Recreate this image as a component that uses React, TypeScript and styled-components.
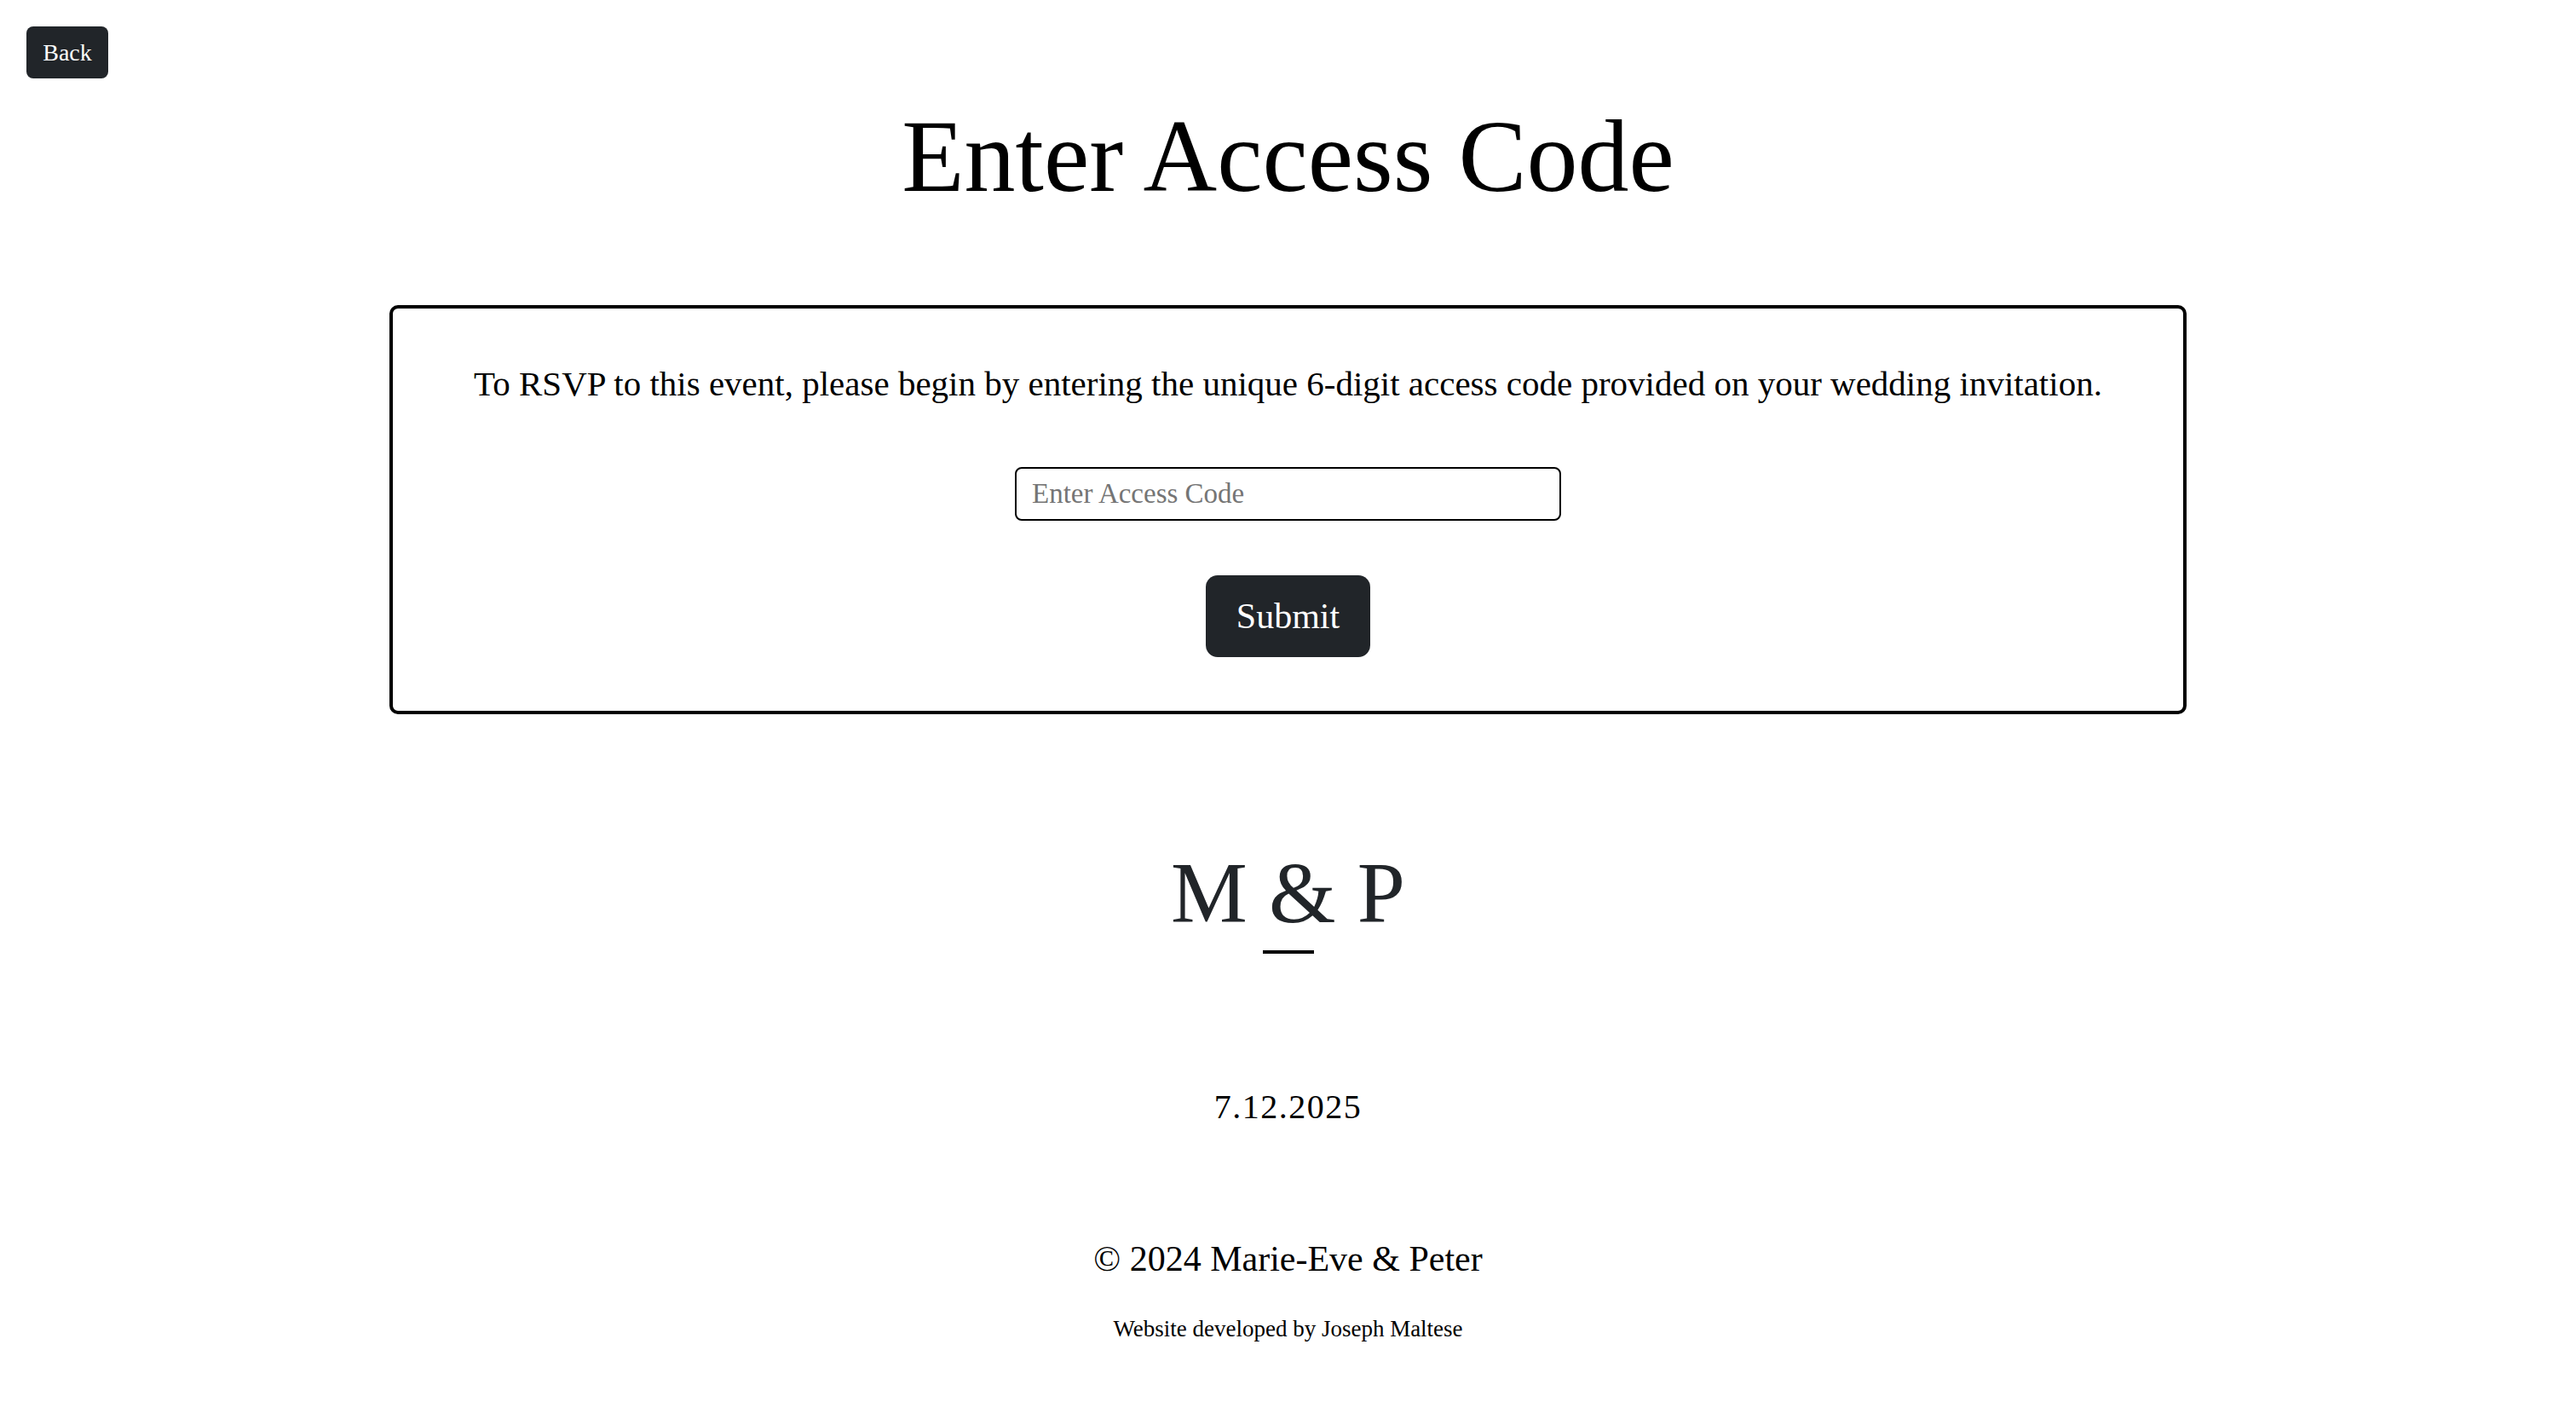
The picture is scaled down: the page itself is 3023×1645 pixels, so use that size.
import React, { useState } from "react";
import styled, { createGlobalStyle } from "styled-components";

const GlobalStyle = createGlobalStyle`
  html, body {
    margin: 0;
    padding: 0;
    background: #fff;
  }
  body {
    font-family: "Liberation Serif", "Times New Roman", serif;
    color: #000;
  }
`;

const Page = styled.div`
  display: flex;
  flex-direction: column;
  align-items: center;
  min-height: 100vh;
`;

const TopBar = styled.div`
  align-self: stretch;
  display: flex;
  padding: 31px 31px 0;
`;

const BackButton = styled.button`
  width: 96px;
  height: 61px;
  border: none;
  border-radius: 8px;
  background: #212529;
  color: #fff;
  font-family: inherit;
  font-size: 28px;
  cursor: pointer;
`;

const Title = styled.h1`
  margin: 20px 0 0;
  font-size: 120px;
  font-weight: 400;
  line-height: 1.2;
  text-align: center;
`;

const Card = styled.form`
  box-sizing: border-box;
  width: 2109px;
  margin-top: 102px;
  padding: 58px 40px 63px;
  border: 4px solid #000;
  border-radius: 10px;
  display: flex;
  flex-direction: column;
  align-items: center;
`;

const Intro = styled.p`
  margin: 0;
  font-size: 41px;
  line-height: 1.5;
  text-align: center;
`;

const CodeInput = styled.input`
  box-sizing: border-box;
  width: 641px;
  height: 63px;
  margin-top: 66px;
  padding: 0 18px;
  border: 2px solid #000;
  border-radius: 8px;
  font-family: inherit;
  font-size: 33px;
  color: #000;
  outline: none;

  &::placeholder {
    color: #757575;
  }
`;

const SubmitButton = styled.button`
  width: 193px;
  height: 96px;
  margin-top: 64px;
  border: none;
  border-radius: 14px;
  background: #212529;
  color: #fff;
  font-family: inherit;
  font-size: 42px;
  cursor: pointer;
`;

const Monogram = styled.div`
  margin-top: 150px;
  font-size: 101px;
  line-height: 1.2;
  color: #212529;
  text-align: center;
`;

const Divider = styled.div`
  width: 60px;
  height: 4px;
  margin-top: 6px;
  background: #000;
`;

const DateLine = styled.div`
  margin-top: 156px;
  font-size: 40px;
  line-height: 1.2;
  letter-spacing: 1.5px;
`;

const Copyright = styled.div`
  margin-top: 129px;
  font-size: 42px;
  line-height: 1.2;
`;

const Credit = styled.div`
  margin-top: 41px;
  font-size: 27px;
  line-height: 1.2;
`;

export default function App() {
  const [code, setCode] = useState("");

  return (
    <>
      <GlobalStyle />
      <Page>
        <TopBar>
          <BackButton type="button">Back</BackButton>
        </TopBar>
        <Title>Enter Access Code</Title>
        <Card onSubmit={(e) => e.preventDefault()}>
          <Intro>
            To RSVP to this event, please begin by entering the unique 6-digit access code
            provided on your wedding invitation.
          </Intro>
          <CodeInput
            placeholder="Enter Access Code"
            value={code}
            maxLength={6}
            onChange={(e) => setCode(e.target.value)}
          />
          <SubmitButton type="submit">Submit</SubmitButton>
        </Card>
        <Monogram>M &amp; P</Monogram>
        <Divider />
        <DateLine>7.12.2025</DateLine>
        <Copyright>© 2024 Marie-Eve &amp; Peter</Copyright>
        <Credit>Website developed by Joseph Maltese</Credit>
      </Page>
    </>
  );
}
